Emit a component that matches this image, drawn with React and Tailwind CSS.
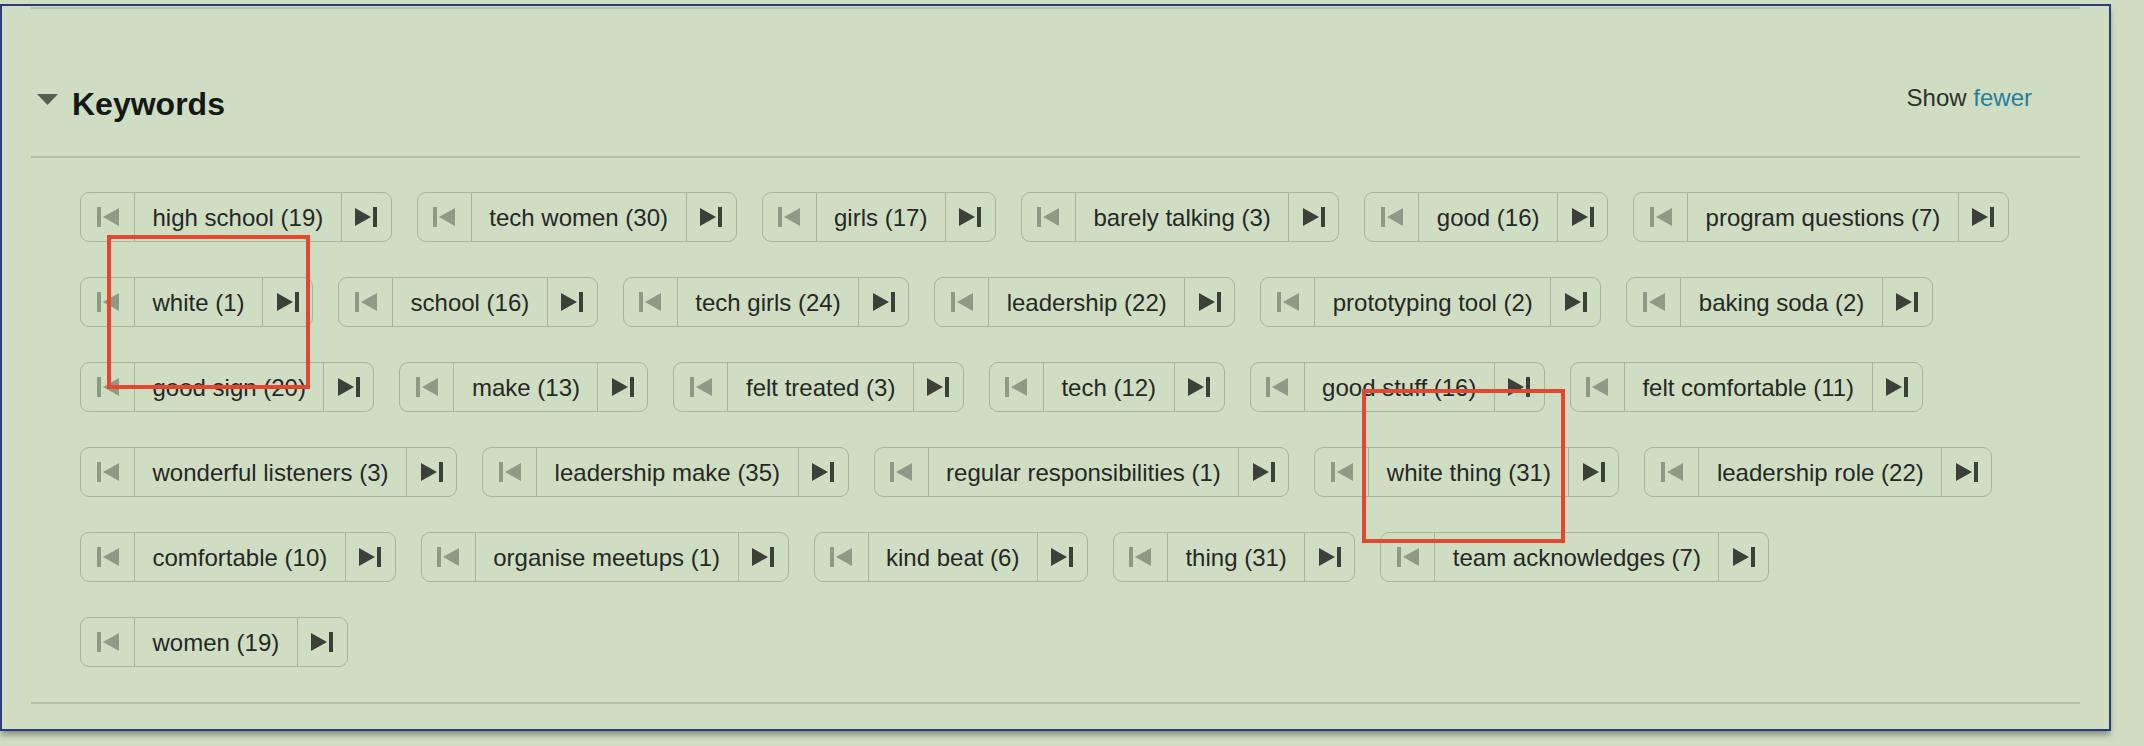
const rows = [
  ['high school (19)', 'tech women (30)', 'girls (17)', 'barely talking (3)', 'good (16)', 'program questions (7)'],
  ['white (1)', 'school (16)', 'tech girls (24)', 'leadership (22)', 'prototyping tool (2)', 'baking soda (2)'],
  ['good sign (20)', 'make (13)', 'felt treated (3)', 'tech (12)', 'good stuff (16)', 'felt comfortable (11)'],
  ['wonderful listeners (3)', 'leadership make (35)', 'regular responsibilities (1)', 'white thing (31)', 'leadership role (22)'],
  ['comfortable (10)', 'organise meetups (1)', 'kind beat (6)', 'thing (31)', 'team acknowledges (7)'],
  ['women (19)'],
]

function FirstIcon() {
  return (
    <svg width="24" height="22" viewBox="0 0 24 22" className="text-[#8d9b86]" fill="currentColor">
      <rect x="1" y="1" width="4" height="20" />
      <polygon points="23,2 23,20 7,11" />
    </svg>
  )
}

function LastIcon() {
  return (
    <svg width="24" height="22" viewBox="0 0 24 22" className="text-[#3b4039]" fill="currentColor">
      <polygon points="1,2 1,20 17,11" />
      <rect x="19" y="1" width="4" height="20" />
    </svg>
  )
}

function KeywordButton({ label }) {
  return (
    <div className="flex h-[50px] items-stretch rounded-[9px] border border-[#a5b49b]">
      <button className="flex w-[53px] items-center justify-center">
        <FirstIcon />
      </button>
      <span className="flex items-center border-x border-[#a5b49b] px-[17.5px] pt-[2px] text-[24px] leading-none text-[#262825]">
        {label}
      </span>
      <button className="flex w-[49px] items-center justify-center">
        <LastIcon />
      </button>
    </div>
  )
}

export default function App() {
  return (
    <div className="relative h-[746px] w-[2144px] overflow-hidden bg-[#cfdec3] pt-[4px] font-['Liberation_Sans',Arial,sans-serif]">
      <div className="h-[727px] w-[2111px] border-2 border-[#2c3a7a] px-[29px] shadow-[0_5px_6px_-1px_rgba(0,0,0,0.35)]">
        <div className="mt-[1px] h-[2px] bg-[#b5c4aa]" />

        <div className="mt-[77px] flex items-start justify-between">
          <div className="ml-[6px] mt-[2px] flex items-start gap-[14px]">
            <svg width="21" height="11" viewBox="0 0 21 11" className="mt-[6px] text-[#575d56]" fill="currentColor">
              <polygon points="0,0 21,0 10.5,11" />
            </svg>
            <h2 className="text-[32px] font-bold leading-none text-[#151715]">Keywords</h2>
          </div>
          <div className="mr-[48px] text-[24px] leading-none text-[#2e302d]">
            Show <a className="text-[#2b7d9b]">fewer</a>
          </div>
        </div>

        <div className="mt-[36px] h-[2px] bg-[#b5c4aa]" />

        <div className="ml-[49px] mt-[34px] flex flex-col gap-[35px]">
          {rows.map((row, i) => (
            <div key={i} className="flex gap-[25px]">
              {row.map(label => (
                <KeywordButton key={label} label={label} />
              ))}
            </div>
          ))}
        </div>

        <div className="mt-[35px] h-[2px] bg-[#b5c4aa]" />
      </div>

      {/* annotation boxes */}
      <div className="absolute left-[107px] top-[235px] h-[154px] w-[203px] border-4 border-[#e5462c]" />
      <div className="absolute left-[1362px] top-[389px] h-[154px] w-[203px] border-4 border-[#e5462c]" />
    </div>
  )
}
